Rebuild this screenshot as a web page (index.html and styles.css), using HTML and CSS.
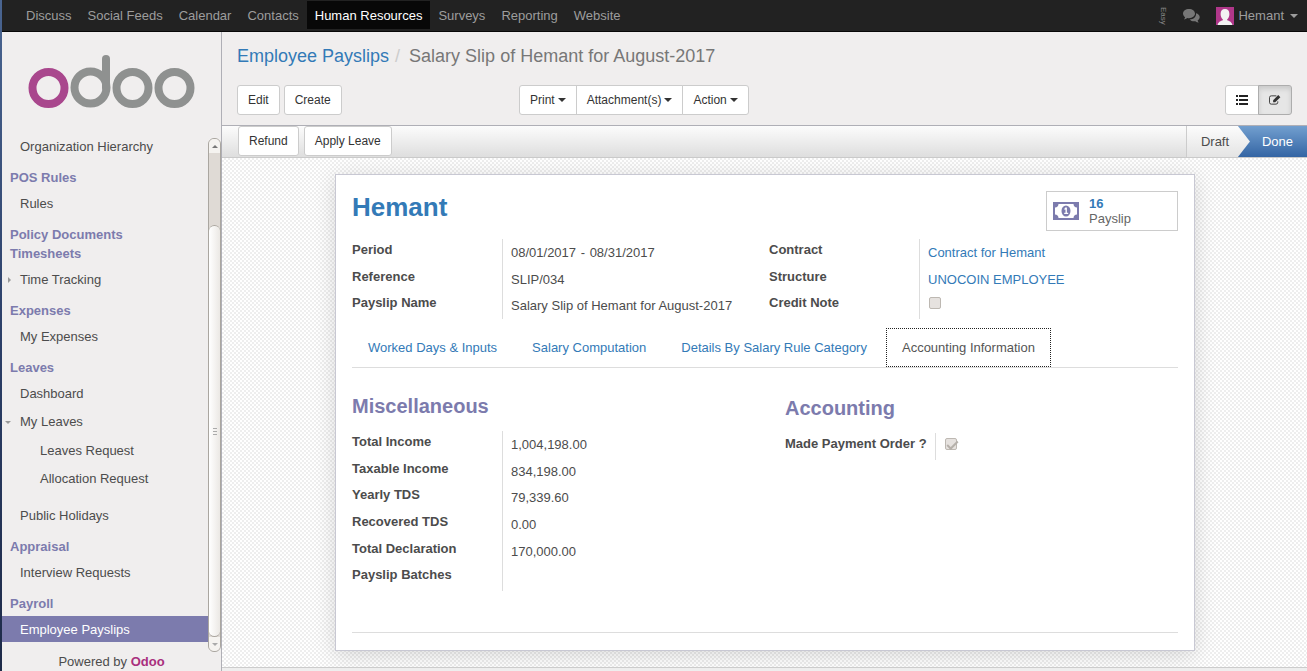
FILE: index.html
```html
<!DOCTYPE html>
<html lang="en">
<head>
<meta charset="utf-8">
<title>Salary Slip of Hemant for August-2017 - Odoo</title>
<link rel="stylesheet" href="styles.css">
</head>
<body>
<header class="topbar">
  <nav class="topnav">
    <a href="#">Discuss</a><a href="#">Social Feeds</a><a href="#">Calendar</a><a href="#">Contacts</a><a href="#" class="current">Human Resources</a><a href="#">Surveys</a><a href="#">Reporting</a><a href="#">Website</a>
  </nav>
  <div class="systray">
    <a href="#" class="easy">Easy</a>
    <a href="#" class="chat" aria-label="Messages"><svg width="17" height="14" viewBox="0 0 17 14"><path fill="#777" d="M6 0c3.4 0 6 2 6 4.600S9.400 9.200 6 9.200c-.6 0-1.100 0-1.600-.2C3.300 9.900 2 10.300.9 10.400c.7-.7 1.100-1.300 1.200-2.100C.8 7.400 0 6.100 0 4.600 0 2 2.600 0 6 0z"/><path fill="#777" d="M13 4.200c2.200.6 3.700 2.100 3.700 3.900 0 1.400-.8 2.600-2.100 3.400.1.800.5 1.400 1.200 2-1.300-.1-2.500-.5-3.500-1.300-2.200.3-4.400-.3-5.600-1.800 3.800 0 6.800-2.500 6.300-6.200z"/></svg></a>
    <button type="button" class="user">
      <svg class="avatar" width="18" height="18" viewBox="0 0 18 18"><path fill="#b0378a" d="M0 0h18v18H0z"/><path fill="#f3f3f3" d="M9 2c2.800 0 4.400 1.800 4.400 4.900 0 2.300-1 4.400-2.200 5.300v1c1.900.7 4.400 1.300 5.200 4.800H1.600c.8-3.500 3.300-4.100 5.200-4.800v-1C5.600 11.300 4.600 9.200 4.600 6.900 4.600 3.800 6.200 2 9 2z"/></svg>
      <span>Hemant</span><i class="caret"></i>
    </button>
  </div>
</header>
<div class="webclient">
  <aside class="sidebar">
    <a href="#" class="logo" aria-label="Odoo"><svg width="168" height="56" viewBox="0 0 168 56"><g fill="none" stroke-width="8"><circle cx="21.500" cy="34" r="16" stroke="#a9478d"/><g stroke="#8f9190"><circle cx="63.500" cy="33.500" r="16"/><circle cx="105.500" cy="34" r="16"/><circle cx="147.500" cy="34" r="16"/><path stroke-linecap="round" d="M79 33.500V5"/></g></g></svg></a>
    <div class="menuarea">
      <nav class="menu">
        <ul><li><a href="#">Organization Hierarchy</a></li></ul>
        <h2>POS Rules</h2>
        <ul><li><a href="#">Rules</a></li></ul>
        <h2>Policy Documents</h2>
        <h2>Timesheets</h2>
        <ul><li><a href="#" class="closed">Time Tracking</a></li></ul>
        <h2>Expenses</h2>
        <ul><li><a href="#">My Expenses</a></li></ul>
        <h2>Leaves</h2>
        <ul>
          <li><a href="#">Dashboard</a></li>
          <li><a href="#" class="open">My Leaves</a>
            <ul class="sub"><li><a href="#">Leaves Request</a></li><li><a href="#">Allocation Request</a></li></ul></li>
          <li><a href="#">Public Holidays</a></li>
        </ul>
        <h2>Appraisal</h2>
        <ul><li><a href="#">Interview Requests</a></li></ul>
        <h2>Payroll</h2>
        <ul><li><a href="#" class="active">Employee Payslips</a></li></ul>
      </nav>
      <div class="scroll"><i class="up"></i><div class="thumb"><i></i><i></i><i></i></div><i class="down"></i></div>
    </div>
    <footer class="powered">Powered by <a href="#">Odoo</a></footer>
  </aside>
  <main class="content">
    <div class="control">
      <div class="crumbs"><a href="#">Employee Payslips</a><span class="sep">/</span><span>Salary Slip of Hemant for August-2017</span></div>
      <div class="tools">
        <div class="left"><button type="button" class="btn">Edit</button><button type="button" class="btn">Create</button></div>
        <div class="right">
          <div class="group"><button type="button" class="btn">Print<i class="caret"></i></button><button type="button" class="btn">Attachment(s)<i class="caret"></i></button><button type="button" class="btn">Action<i class="caret"></i></button></div>
          <div class="group views">
            <button type="button" class="btn" aria-label="List"><svg width="12" height="10" viewBox="0 0 12 10"><path fill="#222" d="M0 0h2v2H0zM0 4h2v2H0zM0 8h2v2H0zM3 0h9v2H3zM3 4h9v2H3zM3 8h9v2H3z"/></svg></button>
            <button type="button" class="btn pressed" aria-label="Form"><svg width="12" height="12" viewBox="0 0 13 12"><path fill="none" stroke="#333" d="M8 1.500H2.500a2 2 0 0 0-2 2v5a2 2 0 0 0 2 2h5a2 2 0 0 0 2-2V7.500"/><path fill="#333" d="M4.500 6.200 10 .7l2.300 2.200-5.600 5.600H4.500z"/></svg></button>
          </div>
        </div>
      </div>
    </div>
    <div class="statusbar">
      <div class="actions"><button type="button" class="btn">Refund</button><button type="button" class="btn">Apply Leave</button></div>
      <ol class="stages"><li class="draft">Draft</li><li class="done">Done</li></ol>
    </div>
    <div class="canvas">
      <section class="sheet">
        <div class="head">
          <h1><a href="#">Hemant</a></h1>
          <button type="button" class="stat"><svg width="26" height="18" viewBox="0 0 26 18"><path fill="#7c7bad" fill-rule="evenodd" d="M0 0h26v18H0zM5.500 2a3.700 3.700 0 0 1-3.500 3.500v7A3.700 3.700 0 0 1 5.500 16h15a3.700 3.700 0 0 1 3.500-3.500v-7A3.700 3.700 0 0 1 20.500 2z"/><ellipse cx="13" cy="9" rx="4.500" ry="5.500" fill="#7c7bad"/><path fill="#fff" d="M12.300 5.500h1.600v5.300h1.300V12h-4v-1.200h1.300V7.400l-1 .5V6.600z"/></svg><span><b>16</b><br>Payslip</span></button>
        </div>
        <div class="cols">
          <dl class="fields">
            <dt>Period</dt><dd>08/01/2017 <span class="dash">-</span> 08/31/2017</dd>
            <dt>Reference</dt><dd>SLIP/034</dd>
            <dt>Payslip Name</dt><dd>Salary Slip of Hemant for August-2017</dd>
          </dl>
          <dl class="fields">
            <dt>Contract</dt><dd><a href="#">Contract for Hemant</a></dd>
            <dt>Structure</dt><dd><a href="#">UNOCOIN EMPLOYEE</a></dd>
            <dt><label for="credit">Credit Note</label></dt><dd><input type="checkbox" id="credit" disabled></dd>
          </dl>
        </div>
        <nav class="tabs"><a href="#">Worked Days &amp; Inputs</a><a href="#">Salary Computation</a><a href="#">Details By Salary Rule Category</a><a href="#" class="selected">Accounting Information</a></nav>
        <div class="cols page">
          <section>
            <h3>Miscellaneous</h3>
            <dl class="fields">
              <dt>Total Income</dt><dd>1,004,198.00</dd>
              <dt>Taxable Income</dt><dd>834,198.00</dd>
              <dt>Yearly TDS</dt><dd>79,339.60</dd>
              <dt>Recovered TDS</dt><dd>0.00</dd>
              <dt>Total Declaration</dt><dd>170,000.00</dd>
              <dt>Payslip Batches</dt><dd></dd>
            </dl>
          </section>
          <section class="accounting">
            <h3>Accounting</h3>
            <dl class="fields">
              <dt><label for="made">Made Payment Order ?</label></dt><dd><input type="checkbox" id="made" checked disabled></dd>
            </dl>
          </section>
        </div>
      </section>
    </div>
    <div class="chatter"></div>
  </main>
</div>
</body>
</html>
```
FILE: styles.css
```css
* { box-sizing: border-box; }
body {
  margin: 0;
  min-height: 100vh;
  display: flex;
  flex-direction: column;
  border-left: 2px solid;
  border-image: linear-gradient(#4a6591, #2c3f68 50%, #1e2a48) 1;
  background: #f0eeee;
  color: #4c4c4c;
  font: 13px/20px "Liberation Sans", Arial, sans-serif;
}
a { color: #337ab7; text-decoration: none; }
button { font: inherit; color: inherit; cursor: pointer; }
ul, ol, dl, dd, h1, h2, h3 { margin: 0; padding: 0; list-style: none; }
svg { display: block; }
.caret { display: inline-block; border: 4px solid transparent; border-top-color: currentColor; border-bottom: 0; }

.topbar { display: flex; justify-content: space-between; height: 32px; background: #222; border-bottom: 1px solid #080808; }
.topnav { display: flex; padding: 1px 0 2px 16px; }
.topnav a { padding: 4px 8px; color: #9d9d9d; line-height: 21px; white-space: nowrap; }
.topnav .current { background: #080808; color: #fff; }
.systray { display: flex; align-items: center; gap: 16px; padding-right: 9px; }
.easy { writing-mode: vertical-rl; font-size: 8px; line-height: 8px; color: #888; }
.user { display: flex; align-items: center; gap: 4px; padding: 0; border: 0; background: none; color: #9d9d9d; }
.user .caret { margin-left: 2px; }

.webclient { display: flex; flex: 1; }
.sidebar { display: flex; flex-direction: column; width: 220px; flex: none; border-right: 1px solid #afafb6; }
.logo { padding: 22px 0 20px 25px; }
.menuarea { display: flex; flex: 1; }
.menu { flex: 1; }
.menu ul { padding: 3px 0 7px; }
.menu a { display: block; position: relative; padding: 4px 0 2px 18px; margin-bottom: 2px; line-height: 20px; color: #4c4c4c; }
.menu h2 { padding-left: 8px; color: #7c7bad; font-size: 13px; line-height: 19px; }
.menu .sub { padding: 1px 0 9px; }
.menu .sub a { padding-left: 38px; }
.menu .active { background: #7c7bad; color: #fff; }
.closed::before, .open::before { content: ""; position: absolute; left: 6px; top: 11px; border: 3px solid transparent; border-left-color: #999; border-right: 0; }
.open::before { left: 3px; top: 13px; border: 3px solid transparent; border-top-color: #999; border-bottom: 0; }
.scroll { display: flex; flex-direction: column; width: 13px; margin-top: 8px; border: 1px solid #aaa6a0; border-radius: 6px; background: #dfdad5; overflow: hidden; }
.thumb { flex: 1; display: flex; flex-direction: column; align-items: center; justify-content: center; gap: 2px; margin-top: 72px; border: solid #aaa6a0; border-width: 1px 0; border-radius: 6px; background: linear-gradient(90deg, #fff, #ebe8e4); }
.thumb i { width: 4px; height: 1px; background: #aaa; }
.up, .down { height: 14px; flex: none; display: flex; align-items: center; justify-content: center; background: #f5f3f0; }
.up::before, .down::before { content: ""; border: 3px solid transparent; border-top: 0; border-bottom-color: #777; }
.down::before { border: 3px solid transparent; border-bottom: 0; border-top-color: #aaa; }
.powered { height: 20px; text-align: center; }
.powered a { color: #a9307d; font-weight: bold; }

.content { display: flex; flex-direction: column; flex: 1; min-width: 0; }
.control { padding: 12px 15px 10px; border-bottom: 1px solid #afafb6; }
.crumbs { display: flex; font-size: 18px; line-height: 24px; color: #777; }
.sep { padding: 0 9px 0 6px; color: #ccc; }
.tools { display: flex; margin-top: 17px; }
.left { width: 282px; display: flex; gap: 4px; }
.right { display: flex; flex: 1; justify-content: space-between; }
.btn { height: 30px; padding: 0 10px; border: 1px solid #ccc; border-radius: 3px; background: #fff; color: #333; font-size: 12px; line-height: 18px; white-space: nowrap; }
.btn .caret { margin-left: 3px; vertical-align: 2px; }
.group { display: flex; }
.group .btn { border-radius: 0; margin-left: -1px; }
.group .btn:first-child { margin-left: 0; border-radius: 3px 0 0 3px; }
.group .btn:last-child { border-radius: 0 3px 3px 0; }
.group .pressed { background: #e6e6e6; border-color: #adadad; box-shadow: inset 0 3px 5px #00000020; }
.statusbar { display: flex; justify-content: space-between; height: 32px; padding-left: 16px; border-bottom: 1px solid #cacaca; background: linear-gradient(#fcfcfc, #dedede); }
.actions { display: flex; gap: 5px; }
.stages { display: flex; line-height: 32px; }
.draft { width: 64px; padding-left: 14px; border-left: 1px solid #ccc; clip-path: polygon(0 0, 52px 0, 64px 50%, 52px 100%, 0 100%); background: linear-gradient(#fcfcfc, #e4e4e4); z-index: 1; }
.done { margin-left: -13px; padding: 0 14px 0 25px; color: #fff; background: linear-gradient(#729fcf, #3465a4); }
.canvas { flex: 1; padding: 16px 112px 16px 113px; background: repeating-conic-gradient(#eee 0 25%, #fff 0 50%) 0 0 / 4px 4px; }
.chatter { height: 5px; border-top: 1px solid #ccc; background: #eee; }
.sheet { height: 100%; padding: 16px 16px 17px; border: 1px solid #c8c8d3; background: #fff; box-shadow: 0 4px 20px #00000026; }
.head { display: flex; justify-content: space-between; }
h1 { font-size: 26px; line-height: 32px; }
.stat { display: flex; align-items: center; gap: 10px; width: 132px; height: 40px; padding: 0 6px; border: 1px solid #ccc; background: #fff; color: #666; line-height: 15px; text-align: left; }
.stat b { color: #337ab7; }
.cols { display: grid; grid-template-columns: 417px 1fr; }
.head + .cols { margin-top: 8px; }
.fields { display: grid; grid-template-columns: 150px 1fr; grid-auto-rows: 27px 26px 27px; }
.fields dt { padding-top: 1px; font-weight: bold; }
.fields dd { padding: 4px 0 0 8px; border-left: 1px solid #ddd; }
.dash { margin: 0 1px; }
.fields input { display: block; width: 12px; height: 12px; margin: 1px 0 0 1px; appearance: none; border: 1px solid #bdb8b2; border-radius: 2px; background: #e6e2df; }
.fields input:checked::before { content: ""; display: block; width: 9px; height: 4px; margin: 2px 0 0 1px; border: solid #b5b0aa; border-width: 0 0 2px 2px; transform: rotate(-45deg); }
.tabs { display: flex; margin-top: 9px; border-bottom: 1px solid #ddd; }
.tabs a { padding: 9px 15px; margin-right: 3px; border: 1px solid transparent; line-height: 19px; }
.tabs .selected { border: 1px dotted #222; color: #555; }
.page { grid-template-columns: 433px 1fr; padding: 25px 0 41px; border-bottom: 1px solid #ddd; }
h3 { margin-bottom: 12px; color: #7c7bad; font-size: 20px; line-height: 26px; }
.accounting { padding-top: 2px; }
```
